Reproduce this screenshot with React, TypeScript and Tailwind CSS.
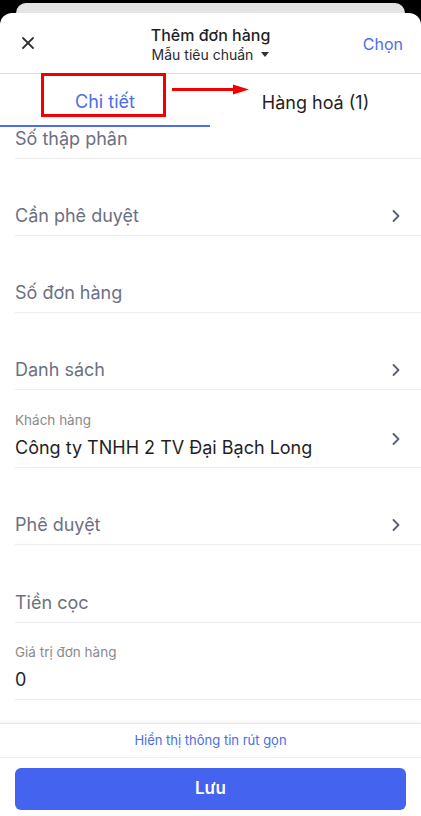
import { X, ChevronRight } from "lucide-react";

type Row = {
  label?: string;
  value: string;
  filled?: boolean;
  chevron?: boolean;
  tall?: boolean;
};

const rows: Row[] = [
  { value: "Số thập phân" },
  { value: "Cần phê duyệt", chevron: true },
  { value: "Số đơn hàng" },
  { value: "Danh sách", chevron: true },
  { label: "Khách hàng", value: "Công ty TNHH 2 TV Đại Bạch Long", filled: true, chevron: true, tall: true },
  { value: "Phê duyệt", chevron: true },
  { value: "Tiền cọc", tall: true },
  { label: "Giá trị đơn hàng", value: "0", filled: true },
];

function FieldRow({ row }: { row: Row }) {
  return (
    <div
      className={
        row.tall
          ? "ml-[15px] flex h-[78px] items-end border-b border-[#ececec] pb-[7px] pr-[15px]"
          : "ml-[15px] flex h-[77px] items-end border-b border-[#ececec] pb-[7px] pr-[15px]"
      }
    >
      <div className="flex min-w-0 flex-1 flex-col">
        {row.label && (
          <span className="mb-[8px] text-[13.5px] leading-4 text-[#8a8a8a]">{row.label}</span>
        )}
        <span
          className={
            row.filled
              ? "text-[18px] leading-6 text-[#1f1f1f]"
              : "text-[18px] leading-6 text-[#6c7083]"
          }
        >
          {row.value}
        </span>
      </div>
      {row.chevron && (
        <ChevronRight
          className={row.label ? "mb-[11px] h-5 w-5 text-[#5a5f75]" : "mb-[2px] h-5 w-5 text-[#5a5f75]"}
          strokeWidth={2.2}
        />
      )}
    </div>
  );
}

export default function App() {
  return (
    <div
      className="flex h-[816px] w-[421px] flex-col overflow-hidden bg-black"
      style={{ fontFamily: "Inter, 'Noto Sans', sans-serif" }}
    >
      {/* stacked sheet behind */}
      <div className="mx-[16px] mt-[3px] h-[20px] shrink-0 rounded-t-[10px] bg-[#e4e4e4]" />

      <div className="-mt-[10px] flex min-h-0 flex-1 flex-col rounded-t-[12px] bg-white">
        {/* header */}
        <div className="flex h-[61px] shrink-0 items-center border-b border-[#e0e0e0] px-[18px]">
          <div className="w-[60px]">
            <X className="h-[20px] w-[20px] text-[#333]" strokeWidth={2.2} />
          </div>
          <div className="flex flex-1 flex-col items-center pt-[3px]">
            <span className="text-[16px] font-medium leading-5 text-[#1f1f1f]">Thêm đơn hàng</span>
            <span className="flex items-center text-[14px] leading-5 text-[#2a2a2a]">
              Mẫu tiêu chuẩn
              <svg className="ml-[8px] h-[6px] w-[8px]" viewBox="0 0 8 6">
                <path d="M0 0h8L4 5z" fill="#333" />
              </svg>
            </span>
          </div>
          <div className="flex w-[60px] justify-end pt-[1px]">
            <span className="text-[16px] text-[#4a6ee8]">Chọn</span>
          </div>
        </div>

        {/* tabs */}
        <div className="relative flex h-[53px] shrink-0">
          <div className="flex w-[210px] items-center justify-center border-b-2 border-[#4a6ee8] pt-[4px]">
            <span className="text-[18px] text-[#4a6ee8]">Chi tiết</span>
          </div>
          <div className="flex flex-1 items-center justify-center pt-[4px]">
            <span className="text-[18px] text-[#1f1f1f]">Hàng hoá (1)</span>
          </div>

          {/* annotation */}
          <div className="absolute left-[41px] top-[-1px] h-[44px] w-[125px] border-[3px] border-[#f00000]" />
          <svg className="absolute left-[172px] top-[9px]" width="80" height="14" viewBox="0 0 80 14">
            <rect x="0" y="5" width="64" height="3" fill="#f00000" />
            <path d="M61 1.5L77 6.5L61 11.5z" fill="#f00000" />
          </svg>
        </div>

        {/* fields */}
        <div className="min-h-0 flex-1 overflow-hidden">
          <div className="-mt-[45px]">
            {rows.map((row) => (
              <FieldRow key={row.value} row={row} />
            ))}
          </div>
        </div>

        {/* footer */}
        <div className="shrink-0 border-t border-[#e6e6e6] shadow-[0_-1px_3px_rgba(0,0,0,0.06)]">
          <div className="flex h-[34px] items-center justify-center border-b border-[#f0f0f0]">
            <span className="text-[13px] text-[#4a6ee8]">Hiển thị thông tin rút gọn</span>
          </div>
          <div className="px-[15px] pb-[6px] pt-[10px]">
            <button className="flex h-[42px] w-full items-center justify-center rounded-[6px] bg-[#4463ee] text-[17px] font-semibold text-white">
              Lưu
            </button>
          </div>
        </div>
      </div>
    </div>
  );
}
